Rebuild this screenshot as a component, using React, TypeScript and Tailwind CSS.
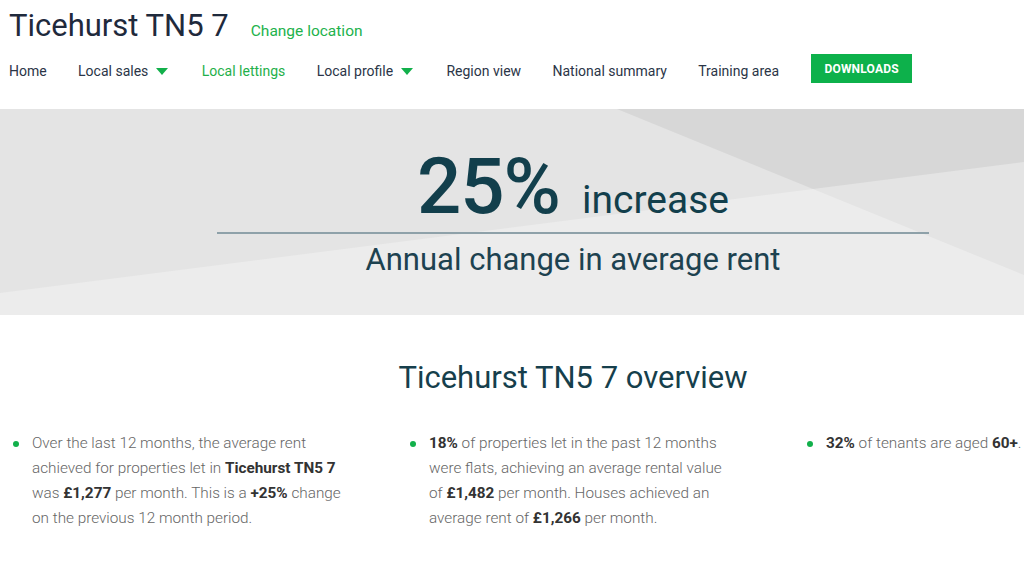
import React from 'react';

const navItems = [
  { label: 'Home' },
  { label: 'Local sales', dropdown: true },
  { label: 'Local lettings', active: true },
  { label: 'Local profile', dropdown: true },
  { label: 'Region view' },
  { label: 'National summary' },
  { label: 'Training area' },
];

function Caret() {
  return (
    <svg width="12" height="7" viewBox="0 0 12 7" className="mt-[1px]">
      <polygon points="0,0 12,0 6,7" fill="#12b04b" />
    </svg>
  );
}

function Bullet({ children }: { children: React.ReactNode }) {
  return (
    <div className="w-[397px] shrink-0 flex gap-[13px]">
      <span className="w-[6px] h-[6px] mt-[10px] rounded-full bg-[#12b04b] shrink-0" />
      <p className="w-[313px] text-[15.3px] leading-[25px] font-light text-[#666]">{children}</p>
    </div>
  );
}

const B = ({ children }: { children: React.ReactNode }) => (
  <b className="font-bold text-[#333]">{children}</b>
);

export default function App() {
  return (
    <div className="w-[1024px] min-h-[583px] bg-white overflow-hidden" style={{ fontFamily: 'Roboto, "Liberation Sans", sans-serif' }}>
      {/* Header */}
      <div className="flex items-baseline pl-[9px] pt-[8px] gap-[22px]">
        <h1 className="text-[31px] leading-[36px] text-[#1f2a3c]">Ticehurst TN5 7</h1>
        <a className="text-[15.5px] text-[#22b24c]">Change location</a>
      </div>

      {/* Nav */}
      <div className="flex items-start pl-[9px] mt-[10px] h-[55px]">
        <div className="flex items-center gap-[31.4px] mt-[7px] text-[14px] leading-[20px]">
          {navItems.map((item) => (
            <div key={item.label} className={`flex items-center gap-[8px] ${item.dropdown ? 'pr-[2px]' : ''}`}>
              <span className={item.active ? 'text-[#1fb04a]' : 'text-[#2b3547]'}>{item.label}</span>
              {item.dropdown && <Caret />}
            </div>
          ))}
        </div>
        <button className="ml-[32px] w-[101px] h-[29px] bg-[#0db14b] text-white text-[12px] font-bold tracking-[0.2px]">
          DOWNLOADS
        </button>
      </div>

      {/* Hero */}
      <div className="relative h-[206px] bg-[#e4e4e4] overflow-hidden">
        <svg className="absolute inset-0" width="1024" height="206" viewBox="0 0 1024 206">
          <polygon points="617,0 1024,0 1024,53 813,80" fill="#d7d7d7" />
          <polygon points="0,184 813,80 1024,166 1024,206 0,206" fill="#ececec" />
        </svg>
        <div className="relative ml-[217px] w-[712px] flex flex-col items-center pt-[39px] text-[#123f4c]">
          <div className="flex items-baseline gap-[22px]">
            <span className="text-[78px] leading-none font-medium tracking-[-1px]">25%</span>
            <span className="text-[39px] leading-none">increase</span>
          </div>
          <div className="w-full h-[1.5px] bg-[#8ea1a9] mt-[6px]" />
          <p className="text-[31px] leading-[36px] mt-[8px] text-[#1d4250]">Annual change in average rent</p>
        </div>
      </div>

      {/* Overview */}
      <h2 className="ml-[217px] w-[712px] text-center text-[31px] leading-[36px] mt-[45px] text-[#163f4c]">
        Ticehurst TN5 7 overview
      </h2>

      <div className="flex pl-[13px] mt-[35px] overflow-hidden">
        <Bullet>
          Over the last 12 months, the average rent achieved for properties let in <B>Ticehurst TN5 7</B> was{' '}
          <B>£1,277</B> per month. This is a <B>+25%</B> change on the previous 12 month period.
        </Bullet>
        <Bullet>
          <B>18%</B> of properties let in the past 12 months were flats, achieving an average rental value
          <br />
          of <B>£1,482</B> per month. Houses achieved an average rent of <B>£1,266</B> per month.
        </Bullet>
        <Bullet>
          <B>32%</B> of tenants are aged <B>60+</B>.
        </Bullet>
      </div>
    </div>
  );
}
